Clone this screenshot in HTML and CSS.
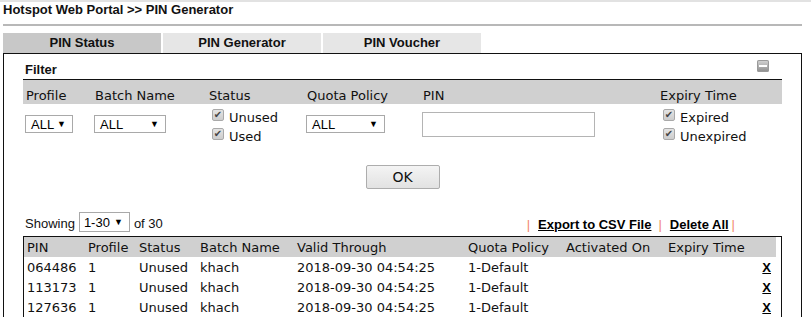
FILE: index.html
```html
<!DOCTYPE html>
<html lang="en">
<head>
  <meta charset="UTF-8" />
  <title>Hotspot Web Portal - PIN Generator</title>
  <link rel="stylesheet" href="styles.css">
</head>
<body>
  <div class="page">
    <h1 class="title">Hotspot Web Portal &gt;&gt; PIN Generator</h1>
    <div class="rule"></div>

    <div class="tabs">
      <div class="tab active">PIN Status</div>
      <div class="tab">PIN Generator</div>
      <div class="tab">PIN Voucher</div>
    </div>

    <div class="panel">
      <div class="filter-head">
        <span class="filter-title">Filter</span>
        <span class="minimize"></span>
      </div>

      <div class="filter-grid">
        <div class="fh">Profile</div>
        <div class="fh">Batch Name</div>
        <div class="fh">Status</div>
        <div class="fh">Quota Policy</div>
        <div class="fh">PIN</div>
        <div class="fh">Expiry Time</div>

        <div class="fc"><div class="select sel-profile"><span>ALL</span><span class="arrow">&#9660;</span></div></div>
        <div class="fc"><div class="select sel-batch"><span>ALL</span><span class="arrow">&#9660;</span></div></div>
        <div class="fc checks">
          <div class="check-line"><span class="check"></span>Unused</div>
          <div class="check-line"><span class="check"></span>Used</div>
        </div>
        <div class="fc"><div class="select sel-quota"><span>ALL</span><span class="arrow">&#9660;</span></div></div>
        <div class="fc"><div class="pin-input"></div></div>
        <div class="fc checks">
          <div class="check-line"><span class="check"></span>Expired</div>
          <div class="check-line"><span class="check"></span>Unexpired</div>
        </div>
      </div>

      <div class="ok-row"><button class="btn">OK</button></div>

      <div class="list-bar">
        <div class="showing">
          <span class="lbl">Showing</span>
          <div class="select sel-page"><span>1-30</span><span class="arrow">&#9660;</span></div>
          <span class="lbl">of 30</span>
        </div>
        <div class="links">
          <span class="sep">|</span><a href="#">Export to CSV File</a><span class="sep">|</span><a href="#">Delete All</a><span class="sep last">|</span>
        </div>
      </div>

      <div class="results">
        <table>
          <colgroup>
            <col style="width:61px"><col style="width:51px"><col style="width:61px"><col style="width:97px">
            <col style="width:171px"><col style="width:98px"><col style="width:102px"><col style="width:90px"><col>
          </colgroup>
          <thead>
            <tr>
              <th>PIN</th><th>Profile</th><th>Status</th><th>Batch Name</th><th>Valid Through</th>
              <th>Quota Policy</th><th>Activated On</th><th>Expiry Time</th><th></th>
            </tr>
          </thead>
          <tbody>
            <tr>
              <td>064486</td><td>1</td><td>Unused</td><td>khach</td><td>2018-09-30 04:54:25</td>
              <td>1-Default</td><td></td><td></td><td class="del"><a href="#">X</a></td>
            </tr>
            <tr>
              <td>113173</td><td>1</td><td>Unused</td><td>khach</td><td>2018-09-30 04:54:25</td>
              <td>1-Default</td><td></td><td></td><td class="del"><a href="#">X</a></td>
            </tr>
            <tr>
              <td>127636</td><td>1</td><td>Unused</td><td>khach</td><td>2018-09-30 04:54:25</td>
              <td>1-Default</td><td></td><td></td><td class="del"><a href="#">X</a></td>
            </tr>
          </tbody>
        </table>
      </div>
    </div>
  </div>
</body>
</html>
```

FILE: styles.css
```css
body {
  margin: 0;
  padding: 0;
  background: #fff;
  color: #111;
  font-family: "DejaVu Sans", Verdana, sans-serif;
  font-size: 13px;
  border-top: 2px solid #e2e2e2;
}
.page {
  padding: 0 9px 0 3px;
}
.title {
  margin: 0;
  font-family: "Liberation Sans", Arial, sans-serif;
  font-size: 13px;
  line-height: 16px;
  font-weight: bold;
  color: #111;
}
.rule {
  height: 2px;
  background: #b8b8b8;
  margin-top: 6px;
}
.tabs {
  display: flex;
  gap: 2px;
  margin-top: 7px;
}
.tab {
  width: 158px;
  height: 20px;
  line-height: 20px;
  text-align: center;
  background: #e6e6e6;
  font-family: "Liberation Sans", Arial, sans-serif;
  font-weight: bold;
  font-size: 13px;
  color: #111;
}
.tab.active {
  background: #c8c8c8;
}
.panel {
  border: 1px solid #111;
  padding: 0 19px 0 19px;
  height: 280px;
}
.filter-head {
  display: flex;
  justify-content: space-between;
  align-items: flex-start;
  height: 26px;
  box-sizing: border-box;
  padding-top: 6px;
  border-bottom: 1px solid #111;
}
.filter-title {
  margin-top: 2px;
  margin-left: 2px;
  font-family: "Liberation Sans", Arial, sans-serif;
  font-weight: bold;
  font-size: 13px;
  line-height: 16px;
}
.minimize {
  position: relative;
  width: 12px;
  height: 12px;
  margin-right: 13px;
  border-radius: 2px;
  background: linear-gradient(#d6d6d6, #8c8c8c);
  box-shadow: inset 0 0 0 1px #9a9a9a;
}
.minimize::after {
  content: "";
  position: absolute;
  left: 2px;
  right: 2px;
  top: 5px;
  height: 2px;
  background: #fff;
}
.filter-grid {
  display: grid;
  grid-template-columns: 69px 114px 98px 116px 237px 1fr;
}
.fh {
  background: #d0d0d0;
  height: 24px;
  box-sizing: border-box;
  padding: 8px 0 0 3px;
  line-height: 16px;
  white-space: nowrap;
}
.fc {
  padding-left: 2px;
}
.select {
  display: flex;
  align-items: center;
  justify-content: space-between;
  box-sizing: border-box;
  height: 18px;
  margin-top: 11px;
  padding: 0 6px 0 5px;
  border: 1px solid #a9a9a9;
  background: #fff;
  font-family: "Liberation Sans", Arial, sans-serif;
  font-size: 13px;
  color: #000;
}
.select .arrow {
  font-size: 9px;
}
.sel-profile { width: 48px; }
.sel-batch { width: 72px; }
.sel-quota { width: 79px; }
.pin-input {
  width: 173px;
  height: 25px;
  box-sizing: border-box;
  margin-top: 8px;
  border: 1px solid #b4b4b4;
  background: #fff;
}
.checks {
  padding-left: 6px;
  padding-top: 4px;
}
.check-line {
  display: flex;
  align-items: flex-start;
  line-height: 19px;
  height: 19px;
}
.check {
  width: 12px;
  height: 12px;
  box-sizing: border-box;
  margin: 1px 5px 0 0;
  border: 1px solid #a9a9a9;
  border-radius: 2px;
  background: linear-gradient(#e4e4e4, #cdcdcd);
  color: #444;
  font-size: 10px;
  line-height: 10px;
  text-align: center;
}
.check::after {
  content: "\2714";
}
.ok-row {
  display: flex;
  justify-content: center;
  margin-top: 19px;
}
.btn {
  width: 74px;
  height: 24px;
  border: 1px solid #adadad;
  border-radius: 2px;
  background: linear-gradient(#f4f4f4, #e2e2e2);
  font-family: "DejaVu Sans", Verdana, sans-serif;
  font-size: 14px;
  color: #111;
  padding: 0;
}
.list-bar {
  display: flex;
  justify-content: space-between;
  align-items: center;
  height: 20px;
  margin-top: 23px;
  font-family: "Liberation Sans", Arial, sans-serif;
  font-size: 13px;
}
.showing {
  display: flex;
  align-items: center;
  gap: 4px;
  padding-left: 2px;
}
.showing .lbl {
  padding-top: 3px;
}
.sel-page {
  width: 51px;
  height: 20px;
  margin-top: 0;
  padding: 0 6px 0 4px;
}
.links {
  display: flex;
  align-items: center;
  padding-right: 47px;
  padding-top: 4px;
  font-weight: bold;
}
.links a {
  color: #000;
  text-decoration: underline;
}
.sep {
  color: #f2866a;
  font-weight: normal;
  margin: 0 8px 0 7px;
}
.sep.last {
  margin: 0 0 0 3px;
}
.results {
  margin-top: 4px;
  border: 1px solid #111;
  padding-right: 5px;
}
table {
  width: 100%;
  border-collapse: collapse;
  table-layout: fixed;
}
th, td {
  height: 20px;
  padding: 1px 0 0 3px;
  box-sizing: border-box;
  text-align: left;
  font-weight: normal;
  white-space: nowrap;
  line-height: 16px;
}
th {
  background: #d0d0d0;
}
td.del {
  text-align: right;
  padding-right: 5px;
}
td.del a {
  color: #000;
  font-family: "Liberation Sans", Arial, sans-serif;
  font-weight: bold;
  text-decoration: underline;
}
```
